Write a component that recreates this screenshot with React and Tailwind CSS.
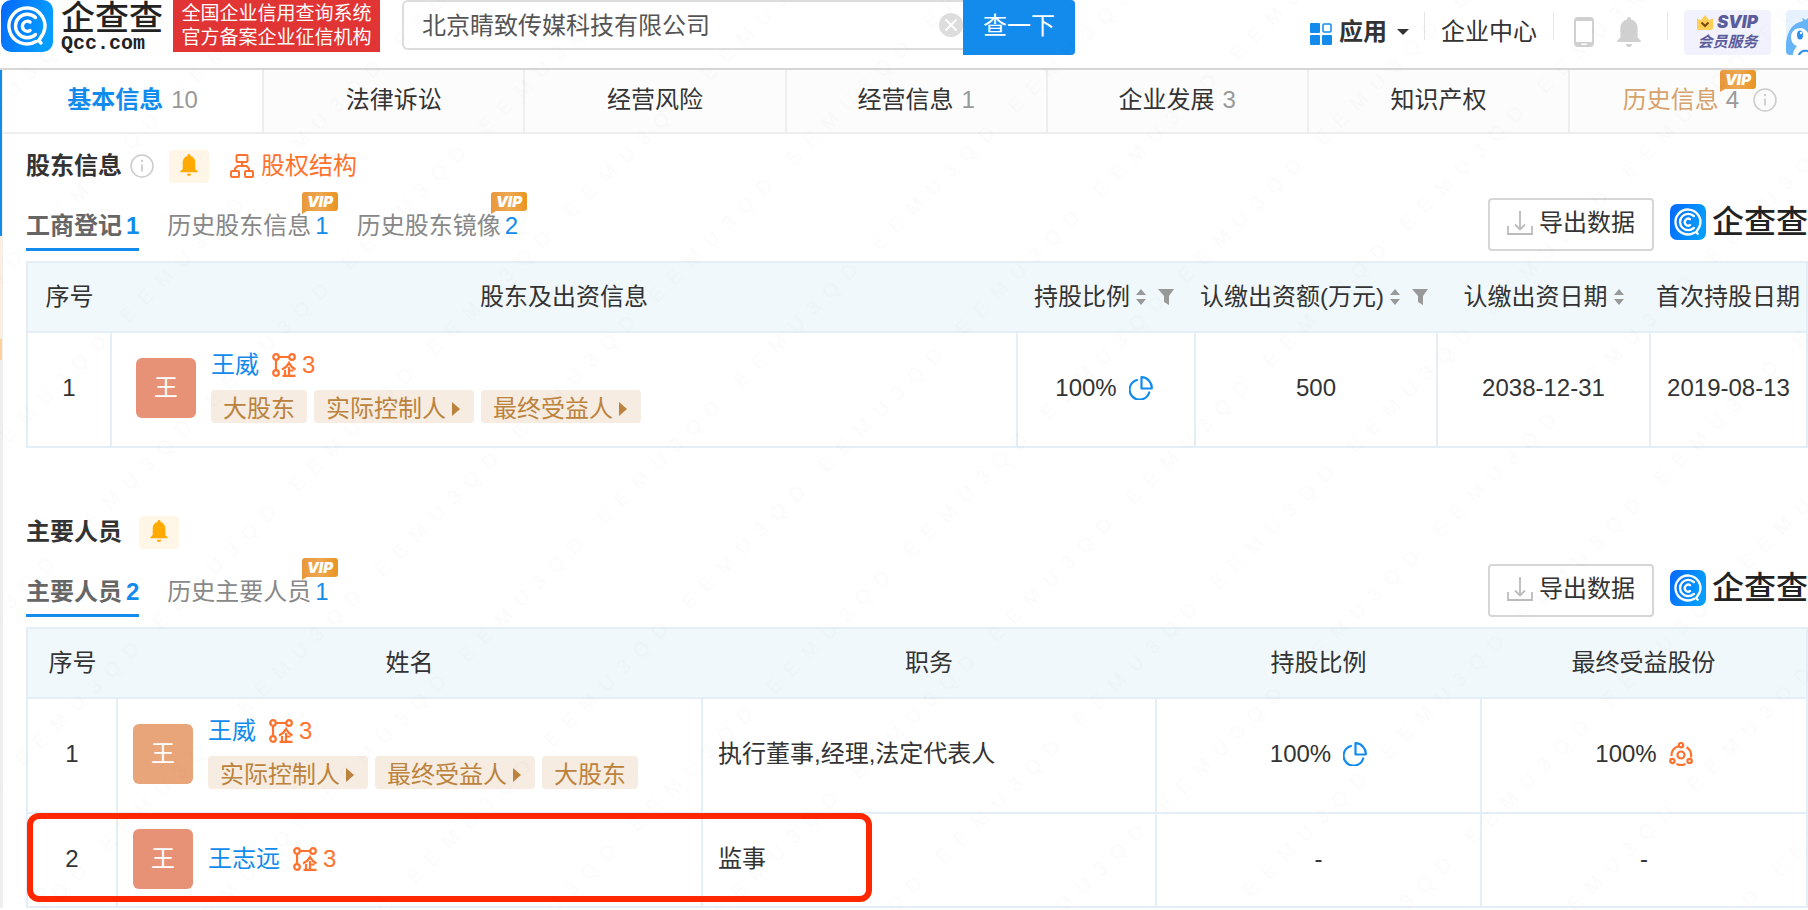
import { useState } from 'react';

const tabs = [
  { name: '基本信息', count: 10 },
  { name: '法律诉讼' },
  { name: '经营风险' },
  { name: '经营信息', count: 1 },
  { name: '企业发展', count: 3 },
  { name: '知识产权' },
];

const shareholderTabs = [
  { name: '工商登记', count: 1 },
  { name: '历史股东信息', count: 1, vip: true },
  { name: '历史股东镜像', count: 2, vip: true },
];

const staffTabs = [
  { name: '主要人员', count: 2 },
  { name: '历史主要人员', count: 1, vip: true },
];

const shareholderColumns = [
  { name: '序号', width: 'w-[84px]' },
  { name: '股东及出资信息', width: '' },
  { name: '持股比例', width: 'w-[178px]', sort: true, filter: true },
  { name: '认缴出资额(万元)', width: 'w-[242px]', sort: true, filter: true },
  { name: '认缴出资日期', width: 'w-[213px]', sort: true },
  { name: '首次持股日期', width: 'w-[157px]' },
];

const staffColumns = [
  { name: '序号', width: 'w-[90px]' },
  { name: '姓名', width: '' },
  { name: '职务', width: 'w-[454px]' },
  { name: '持股比例', width: 'w-[325px]' },
  { name: '最终受益股份', width: 'w-[326px]' },
];

const holderTags = [
  { name: '大股东' },
  { name: '实际控制人', more: true },
  { name: '最终受益人', more: true },
];

const staff = [
  {
    name: '王威',
    avatar: 'bg-[#e9a57a]',
    tags: [{ name: '实际控制人', more: true }, { name: '最终受益人', more: true }, { name: '大股东' }],
    job: '执行董事,经理,法定代表人',
    share: '100%',
    benefit: '100%',
  },
  { name: '王志远', avatar: 'bg-[#e79177]', tags: [], job: '监事', share: '-', benefit: '-' },
];

function LogoMark({ className }) {
  return (
    <svg viewBox="0 0 52 52" className={className} fill="none" aria-hidden="true">
      <defs>
        <linearGradient id="qcc-blue" x1="0" y1="0" x2="1" y2="0.3">
          <stop offset="0" stopColor="#0668fd" />
          <stop offset="1" stopColor="#059dff" />
        </linearGradient>
      </defs>
      <rect width="52" height="52" rx="10" fill="url(#qcc-blue)" />
      <g stroke="#fff" strokeWidth="3.4" strokeLinecap="round">
        <path d="M40 43L37.500 40.500M35 41.500A18 18 0 1 1 42.500 33L38.500 39.500" strokeLinejoin="round" />
        <path d="M34.500 17.500A11.800 11.800 0 1 0 34.500 34.500" />
        <path d="M29 22A5 5 0 1 0 29 30.500" />
      </g>
    </svg>
  );
}

function BellIcon({ className }) {
  return (
    <svg viewBox="0 0 24 30" className={className} fill="currentColor" aria-hidden="true">
      <path d="M12 0a2 2 0 0 1 2 2v.6c4 .9 6.6 4.300 6.600 8.400v9.500l3 3.100c.5.600.3 1.400-.6 1.400H1c-.9 0-1.100-.8-.6-1.400l3-3.100V11c0-4.100 2.600-7.500 6.600-8.400V2a2 2 0 0 1 2-2z" />
      <path d="M9 27h6a3 3 0 0 1-6 0z" />
    </svg>
  );
}

function InfoIcon() {
  return (
    <svg viewBox="0 0 24 24" className="h-6 w-6 shrink-0" fill="none" stroke="#ccc" aria-hidden="true">
      <circle cx="12" cy="12" r="11" strokeWidth="1.500" />
      <path d="M12 10.500v7" strokeWidth="1.800" />
      <circle cx="12" cy="7" r="1.200" fill="#ccc" stroke="none" />
    </svg>
  );
}

function PieIcon() {
  return (
    <svg viewBox="0 0 24 24" className="h-6 w-6" fill="none" stroke="#128bed" strokeWidth="2.200" strokeLinejoin="round" aria-hidden="true">
      <path d="M12.500 1.200v11.300h10.300A10.600 10.600 0 0 0 12.500 1.200z" />
      <path d="M8 4a10 10 0 1 0 12.200 12.500" strokeLinecap="round" />
    </svg>
  );
}

function BenefitIcon() {
  return (
    <svg viewBox="0 0 24 24" className="h-6 w-6" fill="none" stroke="#ff722d" strokeWidth="2.200" aria-hidden="true">
      <circle cx="12" cy="13" r="3.500" />
      <circle cx="12" cy="3.200" r="2.200" />
      <circle cx="3.400" cy="19" r="2.200" />
      <circle cx="20.600" cy="19" r="2.200" />
      <path d="M9 4.300A10 10 0 0 0 2.500 14M17.500 5.300A10 10 0 0 1 22 15.500M7.500 22a10 10 0 0 0 9 0" />
    </svg>
  );
}

function RelationIcon() {
  return (
    <svg viewBox="0 0 24 24" className="h-6 w-6" fill="none" stroke="#ff722d" strokeWidth="2.200" aria-hidden="true">
      <circle cx="4" cy="4" r="2.800" />
      <circle cx="20" cy="4" r="2.800" />
      <circle cx="4" cy="20" r="2.800" />
      <path d="M7 4h10M4 7v10" />
      <path d="M10 16.500c3-1.500 5.500-3.500 7-6.500 1.500 3 3.500 5 6.500 6.500M17 14v8.500M17 17.500h4.500M13 17v5.500M10.500 22.800h13" />
    </svg>
  );
}

function StructureIcon() {
  return (
    <svg viewBox="0 0 24 24" className="h-6 w-6" fill="none" stroke="#ff722d" strokeWidth="2" strokeLinejoin="round" aria-hidden="true">
      <rect x="6.500" y="1" width="11" height="7" rx="1" />
      <rect x="1" y="17" width="8" height="6" rx="1" />
      <rect x="15" y="17" width="8" height="6" rx="1" />
      <path d="M12 8v4M5 17v-2.500L7.500 12h9l2.500 2.500V17" />
    </svg>
  );
}

function VipBadge() {
  return (
    <svg viewBox="0 0 36 22" className="absolute h-[22px] w-9" aria-label="VIP">
      <defs>
        <linearGradient id="vip-gold" x1="0" y1="0" x2="1" y2="0">
          <stop offset="0" stopColor="#e9973a" />
          <stop offset="0.500" stopColor="#eda852" />
          <stop offset="1" stopColor="#ea9420" />
        </linearGradient>
      </defs>
      <path d="M3 0h30a3 3 0 0 1 3 3v13a3 3 0 0 1-3 3H5l-5 3V3a3 3 0 0 1 3-3z" fill="url(#vip-gold)" />
      <text x="18" y="15" textAnchor="middle" fill="#fff" fontSize="15" fontWeight="900" fontStyle="italic" fontFamily="Inter, sans-serif">
        VIP
      </text>
    </svg>
  );
}

function BellButton() {
  return (
    <button type="button" aria-label="监控" className="flex h-[33px] w-10 items-center justify-center rounded-sm bg-[#fff6e8] pb-0.5 text-[#ffaa00]">
      <BellIcon className="h-[22px] w-[18px]" />
    </button>
  );
}

function Tag({ name, more }) {
  return (
    <a href="#tag" className="flex h-[33px] items-center rounded-sm bg-[#f6ece1] px-3 pt-1.5 text-[#bb833d]">
      {name}
      {more && (
        <svg viewBox="0 0 8 14" className="mr-0.5 ml-1.5 h-3.5 w-2" fill="currentColor" aria-hidden="true">
          <path d="M0 0l8 7-8 7z" />
        </svg>
      )}
    </a>
  );
}

function Person({ name, avatar, tags }) {
  return (
    <div className="flex items-center gap-[15px]">
      <div className={`flex h-[60px] w-[60px] shrink-0 items-center justify-center rounded-md text-white ${avatar}`}>王</div>
      <div className={tags.length > 0 ? 'pb-[7px]' : ''}>
        <div className="flex h-9 items-center">
          <a href="#person" className="text-[#128bed]">{name}</a>
          <a href="#relation" className="ml-[13px] flex items-center gap-1.5 text-[#ff722d]">
            <RelationIcon />3
          </a>
        </div>
        {tags.length > 0 && (
          <div className="mt-[7px] flex gap-[7px]">
            {tags.map((tag) => (
              <Tag key={tag.name} {...tag} />
            ))}
          </div>
        )}
      </div>
    </div>
  );
}

function SubTabs({ items }) {
  const [active, setActive] = useState(items[0].name);

  return (
    <div className="flex gap-7">
      {items.map((item) => (
        <button
          key={item.name}
          type="button"
          onClick={() => setActive(item.name)}
          className={`relative flex h-[50px] items-center border-b-[3px] pt-0.5 whitespace-nowrap ${active === item.name ? 'border-[#128bed] font-bold text-[#666]' : 'border-transparent text-[#888]'}`}
        >
          {item.name}
          <span className="ml-1 text-[#128bed]">{item.count}</span>
          {item.vip && (
            <span className="absolute -top-[9px] right-[27px]">
              <VipBadge />
            </span>
          )}
        </button>
      ))}
    </div>
  );
}

function SectionTools() {
  return (
    <div className="flex items-start">
      <button type="button" className="flex h-[53px] w-[166px] items-center justify-center gap-1.5 rounded border-2 border-[#d6d6d6] bg-white pb-1 text-[#333]">
        <svg viewBox="0 0 26 24" className="h-6 w-[26px]" fill="none" stroke="#bbb" strokeWidth="1.800" aria-hidden="true">
          <path d="M13 0v18M8 13.500l5 5 5-5M1 15v8h24v-8" />
        </svg>
        导出数据
      </button>
      <div className="mt-1.5 ml-4 flex items-center gap-1.5">
        <LogoMark className="h-9 w-9" />
        <span className="text-[32px] leading-9 font-medium text-[#222]">企查查</span>
      </div>
    </div>
  );
}

function TableHead({ columns }) {
  return (
    <thead>
      <tr className="bg-[#f1f8fc]">
        {columns.map((col) => (
          <th key={col.name} className={`h-[70px] border-y-2 border-[#e3eef7] p-0 font-normal whitespace-nowrap ${col.width}`}>
            <div className="flex items-center justify-center">
              {col.name}
              {col.sort && (
                <button type="button" aria-label="排序" className="ml-1.5">
                  <svg viewBox="0 0 10 16" className="h-4 w-2.5" fill="#999">
                    <path d="M5 0l5 6H0zM5 16l5-6H0z" />
                  </svg>
                </button>
              )}
              {col.filter && (
                <button type="button" aria-label="筛选" className="mr-1 ml-3">
                  <svg viewBox="0 0 16 16" className="h-4 w-4" fill="#999">
                    <path d="M0 0h16l-5 7v9l-5-3V7z" />
                  </svg>
                </button>
              )}
            </div>
          </th>
        ))}
      </tr>
    </thead>
  );
}

function Header() {
  return (
    <header className="flex h-[70px] items-start border-b-2 border-[#d6d6d6] bg-white">
      <a href="#home" aria-label="企查查" className="flex pl-px">
        <LogoMark className="h-[52px] w-[52px]" />
        <span className="ml-2 flex w-[105px] flex-col text-[#222]">
          <span className="text-[34px] leading-9 font-medium">企查查</span>
          <span className="font-['Liberation_Mono',monospace] text-[20px] leading-4 font-bold">Qcc.com</span>
        </span>
      </a>
      <div className="ml-[7px] h-[52px] w-[207px] shrink-0 bg-[#e13434] pt-0.5 text-center text-[19px] leading-6 text-white">
        <p>全国企业信用查询系统</p>
        <p>官方备案企业征信机构</p>
      </div>
      <form className="ml-[22px] flex items-start" onSubmit={(e) => e.preventDefault()}>
        <div className="flex h-[50px] w-[561px] items-center rounded-l-md border-2 border-r-0 border-[#ddd]">
          <input
            type="text"
            aria-label="搜索企业"
            defaultValue="北京睛致传媒科技有限公司"
            className="h-full min-w-0 flex-1 bg-transparent pb-1 pl-[18px] text-[#555] outline-none"
          />
          <button type="reset" aria-label="清空">
            <svg viewBox="0 0 24 24" className="h-6 w-6">
              <circle cx="12" cy="12" r="12" fill="#ddd" />
              <path d="M6.500 6.500l11 11M17.500 6.500l-11 11" stroke="#fff" strokeWidth="2" />
            </svg>
          </button>
        </div>
        <button type="submit" className="h-[55px] w-28 rounded-r bg-[#128bed] pb-1 text-white">查一下</button>
      </form>

      <nav className="ml-auto flex h-16 items-center">
        <a href="#apps" className="flex items-center font-bold">
          <svg viewBox="0 0 22 22" className="mt-1 mr-[7px] h-[22px] w-[22px]" fill="#128bed" aria-hidden="true">
            <rect width="10" height="10" rx="1" />
            <rect y="12" width="10" height="10" rx="1" />
            <rect x="12" y="12" width="10" height="10" rx="1" />
            <rect x="13" y="1" width="8" height="8" rx="1" fill="none" stroke="#128bed" strokeWidth="1.500" />
          </svg>
          应用
          <svg viewBox="0 0 12 6" className="ml-2.5 h-1.5 w-3" fill="#333" aria-hidden="true">
            <path d="M0 0h12L6 6z" />
          </svg>
        </a>
        <span className="mr-4 mb-3 ml-[15px] h-7 w-px bg-[#e5e5e5]" />
        <a href="#center">企业中心</a>
        <span className="mr-5 mb-3 ml-4 h-7 w-px bg-[#e5e5e5]" />
        <a href="#mobile" aria-label="手机版">
          <svg viewBox="0 0 20 30" className="h-[30px] w-5" aria-hidden="true">
            <rect width="20" height="30" rx="4" fill="#d0d0d0" />
            <rect x="2" y="4" width="16" height="21" fill="#fff" />
            <rect x="7" y="26.500" width="6" height="1.500" rx="0.700" fill="#fff" />
          </svg>
        </a>
        <a href="#messages" aria-label="消息" className="ml-[23px] text-[#d0d0d0]">
          <BellIcon className="h-[30px] w-6" />
        </a>
        <span className="mr-4 mb-3 ml-[26px] h-7 w-px bg-[#e5e5e5]" />
        <a href="#svip" className="flex h-[45px] w-[87px] flex-col items-center justify-center rounded bg-[#f2f2fe] font-bold text-[#5b5c9b] italic">
          <span className="flex items-center gap-1 font-['Inter',sans-serif] text-[17px] leading-5 font-black">
            <svg viewBox="0 0 16 15" className="h-[15px] w-4" aria-hidden="true">
              <path d="M0 3.500l4 1.500L8 0l4 5 4-1.500V13a2 2 0 0 1-2 2H2a2 2 0 0 1-2-2z" fill="#ffcf57" />
              <path d="M4.500 7.500L8 11l3.500-3.500" fill="none" stroke="#7a4a12" strokeWidth="2.200" />
            </svg>
            SVIP
          </span>
          <span className="text-[15px] leading-5">会员服务</span>
        </a>
        <a href="#me" aria-label="我的" className="ml-[15px] h-[45px] w-[22px] overflow-hidden rounded-l">
          <svg viewBox="0 0 22 45" className="h-[45px] w-[22px]" aria-hidden="true">
            <rect width="22" height="45" fill="#e6f2ff" />
            <path d="M0 45V33C1 26 3 20 7 16c3-3 7-4 10-5l-1-3 4 2 2-2v37z" fill="#67b4f8" />
            <path d="M7 45c0-5 3-7 4-9-4-1-6-5-6-9 0-5 4-9 9-9 4 0 6 2 8 5v22z" fill="#fff" />
            <ellipse cx="14" cy="25" rx="3" ry="4.500" fill="#2d8ff0" />
            <circle cx="15" cy="23" r="1.200" fill="#fff" />
            <path d="M12 45c1-4 5-6 10-5v2c-4-1-6 0-8 3z" fill="#2d8ff0" />
          </svg>
        </a>
      </nav>
    </header>
  );
}

function MainTabs() {
  const [active, setActive] = useState('基本信息');

  return (
    <nav className="flex h-16 border-b-2 border-[#eee]">
      {tabs.map((tab) => (
        <button
          key={tab.name}
          type="button"
          onClick={() => setActive(tab.name)}
          className={`flex flex-1 items-center justify-center gap-2 border-r-2 border-[#eee] pb-0.5 ${active === tab.name ? 'bg-white font-bold text-[#128bed]' : 'bg-[#fcfcfc]'}`}
        >
          {tab.name}
          {tab.count && <span className="font-normal text-[#999]">{tab.count}</span>}
        </button>
      ))}
      <button type="button" className="relative flex w-[238px] shrink-0 items-center justify-center bg-[#fcfcfc] pb-0.5 pl-[22px] text-[#d6a36c]">
        历史信息
        <span className="mr-[14px] ml-[7px] text-[#999]">4</span>
        <InfoIcon />
        <span className="absolute top-0 left-[150px]">
          <VipBadge />
        </span>
      </button>
    </nav>
  );
}

function Watermark() {
  return (
    <svg className="pointer-events-none absolute inset-0 h-full w-full" aria-hidden="true">
      <defs>
        <pattern id="mark" width="194" height="120" patternUnits="userSpaceOnUse" patternTransform="translate(732 653) rotate(-45)">
          <text x="0" y="60" fontSize="20" fill="#000" fillOpacity="0.014" style={{ whiteSpace: 'pre' }}>
            {'E  E  M  U  3  Q  D'}
          </text>
        </pattern>
      </defs>
      <rect width="100%" height="100%" fill="url(#mark)" />
    </svg>
  );
}

const cell = 'border-2 border-[#e3eef7] p-0 pb-[3px] text-center whitespace-nowrap';

export default function App() {
  return (
    <div className="relative min-h-screen overflow-hidden bg-white font-['Liberation_Sans','Noto_Sans_CJK_SC',sans-serif] text-2xl leading-9 text-[#333]">
      <Header />
      <div className="flex">
        {/* edge of the side menu */}
        <div className="flex w-0.5 shrink-0 flex-col">
          <span className="h-[166px] bg-[#128bed]" />
          <span className="h-[103px] bg-[#ffeedb]" />
          <span className="h-[21px] bg-[#fdd296]" />
          <span className="flex-1 bg-[#eee]" />
        </div>

        <main className="min-w-0 flex-1 border-l border-[#eee]">
          <MainTabs />

          <section className="mb-[52px] pl-[23px]">
            <div className="flex items-center pt-3.5">
              <h2 className="mr-2 font-bold">股东信息</h2>
              <InfoIcon />
              <div className="ml-[15px]">
                <BellButton />
              </div>
              <a href="#structure" className="ml-[21px] flex items-center gap-[7px] text-[#ff722d]">
                <StructureIcon />
                股权结构
              </a>
            </div>
            <div className="mt-3.5 mb-2.5 flex items-start justify-between">
              <div className="pt-[3px]">
                <SubTabs items={shareholderTabs} />
              </div>
              <SectionTools />
            </div>
            <table className="w-full table-fixed border-collapse border-2 border-[#e3eef7]">
              <TableHead columns={shareholderColumns} />
              <tbody>
                <tr className="h-[115px]">
                  <td className={cell}>1</td>
                  <td className={cell}>
                    <div className="pl-6">
                      <Person name="王威" avatar="bg-[#e79177]" tags={holderTags} />
                    </div>
                  </td>
                  <td className={cell}>
                    <div className="flex items-center justify-center gap-3 pr-1">
                      100%
                      <PieIcon />
                    </div>
                  </td>
                  <td className={cell}>500</td>
                  <td className={cell}>2038-12-31</td>
                  <td className={cell}>2019-08-13</td>
                </tr>
              </tbody>
            </table>
          </section>

          <section className="pl-[23px]">
            <div className="flex items-center gap-[17px] pt-3.5">
              <h2 className="font-bold">主要人员</h2>
              <BellButton />
            </div>
            <div className="mt-3.5 mb-2.5 flex items-start justify-between">
              <div className="pt-[3px]">
                <SubTabs items={staffTabs} />
              </div>
              <SectionTools />
            </div>
            <div className="relative">
              <table className="w-full table-fixed border-collapse border-2 border-[#e3eef7]">
                <TableHead columns={staffColumns} />
                <tbody>
                  {staff.map((person, i) => (
                    <tr key={person.name} className={i === 0 ? 'h-[115px]' : 'h-[94px]'}>
                      <td className={cell}>{i + 1}</td>
                      <td className={cell}>
                        <div className="pl-[15px]">
                          <Person name={person.name} avatar={person.avatar} tags={person.tags} />
                        </div>
                      </td>
                      <td className={cell}>
                        <p className="pl-[15px] text-left">{person.job}</p>
                      </td>
                      <td className={cell}>
                        <div className="flex items-center justify-center gap-3">
                          {person.share}
                          {person.share !== '-' && <PieIcon />}
                        </div>
                      </td>
                      <td className={cell}>
                        <div className="flex items-center justify-center gap-3">
                          {person.benefit}
                          {person.benefit !== '-' && <BenefitIcon />}
                        </div>
                      </td>
                    </tr>
                  ))}
                </tbody>
              </table>
              {/* marks the supervisor row */}
              <div className="pointer-events-none absolute bottom-1.5 left-px h-[89px] w-[845px] rounded-xl border-[6px] border-[#ff2600]" />
            </div>
          </section>
        </main>
      </div>
      <Watermark />
    </div>
  );
}
